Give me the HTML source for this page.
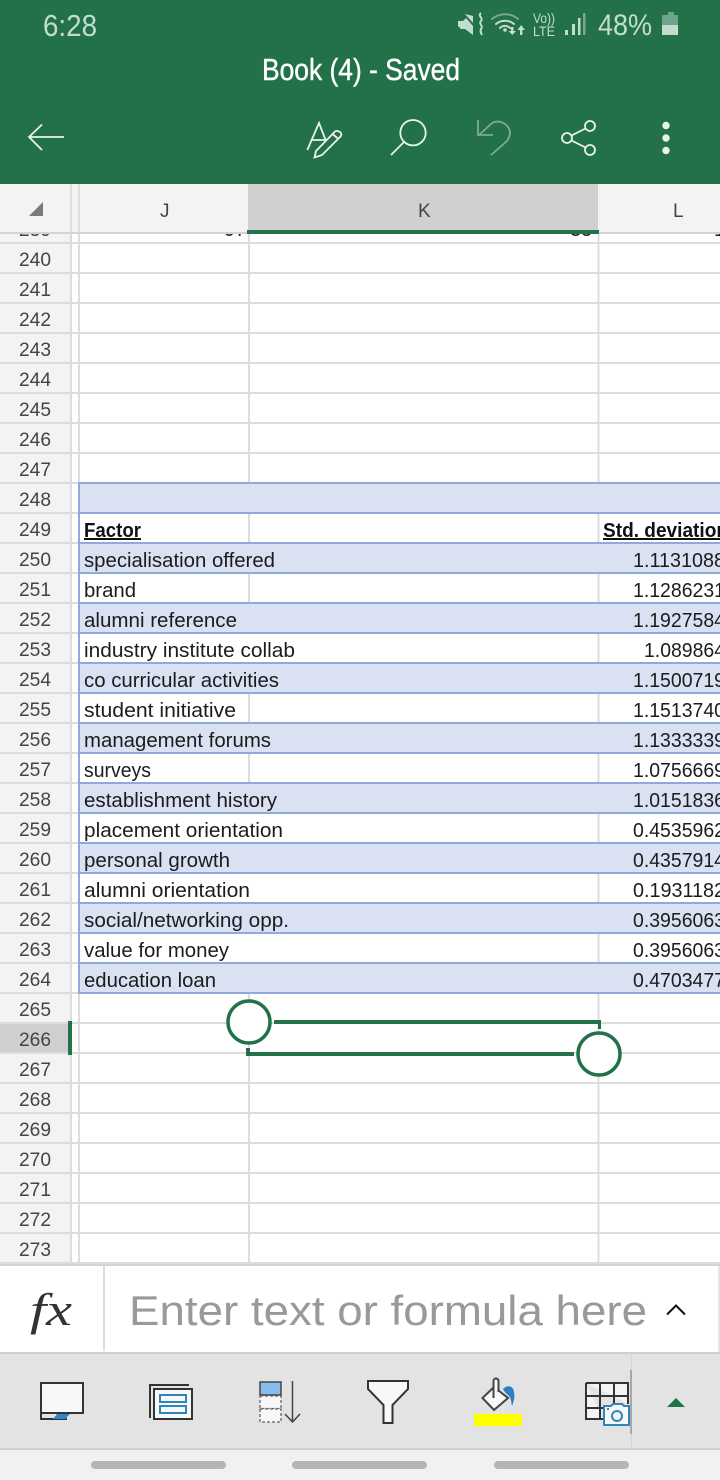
<!DOCTYPE html>
<html><head><meta charset="utf-8"><style>
html,body{margin:0;padding:0;width:720px;height:1480px;overflow:hidden;background:#fff}
svg{display:block}
text{font-family:"Liberation Sans",sans-serif}
.r{font-size:19.2px;fill:#444}
.t{font-size:20px;fill:#1c1c1c}
.h{font-size:19px;fill:#444}
.b{font-weight:bold;text-decoration:underline;fill:#111}
</style></head><body>
<svg width="720" height="1480" viewBox="0 0 720 1480" xmlns="http://www.w3.org/2000/svg">
<defs><clipPath id="c"><rect x="0" y="234" width="720" height="30"/></clipPath></defs>
<rect width="720" height="1480" fill="#fff"/>
<!-- row header -->
<rect x="0" y="184" width="70" height="1078" fill="#f3f3f3"/>
<rect x="0" y="1023" width="70" height="30" fill="#cfcfcf"/>
<!-- partial row 239 -->
<g clip-path="url(#c)"><text class="r" x="19" y="236">239</text><text class="t" x="224" y="236">97</text><text class="t" x="570" y="236">35</text><text class="t" x="714" y="236">1</text></g>
<!-- grid -->
<g fill="#dcdcdc">
<rect x="70" y="184" width="2" height="1080"/><rect x="78" y="184" width="2" height="1080"/>
<rect x="248" y="234" width="2" height="249"/><rect x="597.500" y="234" width="2" height="249"/>
<rect x="248" y="993" width="2" height="270"/><rect x="597.500" y="993" width="2" height="270"/>
<rect x="248" y="513" width="2" height="30"/><rect x="597.500" y="513" width="2" height="30"/>
<rect x="597.500" y="573" width="2" height="30"/><rect x="248" y="573" width="2" height="30"/>
<rect x="597.500" y="633" width="2" height="30"/>
<rect x="597.500" y="693" width="2" height="30"/><rect x="248" y="693" width="2" height="30"/>
<rect x="597.500" y="753" width="2" height="30"/><rect x="248" y="753" width="2" height="30"/>
<rect x="597.500" y="813" width="2" height="30"/><rect x="597.500" y="873" width="2" height="30"/><rect x="597.500" y="933" width="2" height="30"/>
<rect x="0" y="242" width="720" height="2"/><rect x="0" y="272" width="720" height="2"/><rect x="0" y="302" width="720" height="2"/><rect x="0" y="332" width="720" height="2"/><rect x="0" y="362" width="720" height="2"/><rect x="0" y="392" width="720" height="2"/><rect x="0" y="422" width="720" height="2"/><rect x="0" y="452" width="720" height="2"/>
<rect x="0" y="482" width="80" height="2"/><rect x="0" y="512" width="80" height="2"/><rect x="0" y="542" width="80" height="2"/><rect x="0" y="572" width="80" height="2"/><rect x="0" y="602" width="80" height="2"/><rect x="0" y="632" width="80" height="2"/><rect x="0" y="662" width="80" height="2"/><rect x="0" y="692" width="80" height="2"/><rect x="0" y="722" width="80" height="2"/><rect x="0" y="752" width="80" height="2"/><rect x="0" y="782" width="80" height="2"/><rect x="0" y="812" width="80" height="2"/><rect x="0" y="842" width="80" height="2"/><rect x="0" y="872" width="80" height="2"/><rect x="0" y="902" width="80" height="2"/><rect x="0" y="932" width="80" height="2"/><rect x="0" y="962" width="80" height="2"/>
<rect x="0" y="992" width="720" height="2"/><rect x="0" y="1022" width="720" height="2"/><rect x="0" y="1052" width="720" height="2"/><rect x="0" y="1082" width="720" height="2"/><rect x="0" y="1112" width="720" height="2"/><rect x="0" y="1142" width="720" height="2"/><rect x="0" y="1172" width="720" height="2"/><rect x="0" y="1202" width="720" height="2"/><rect x="0" y="1232" width="720" height="2"/><rect x="0" y="1262" width="720" height="2"/>
</g>
<!-- blue rows -->
<g fill="#d9e1f2">
<rect x="79" y="483" width="641" height="30"/><rect x="79" y="543" width="641" height="30"/><rect x="79" y="603" width="641" height="30"/><rect x="79" y="663" width="641" height="30"/><rect x="79" y="723" width="641" height="30"/><rect x="79" y="783" width="641" height="30"/><rect x="79" y="843" width="641" height="30"/><rect x="79" y="903" width="641" height="30"/><rect x="79" y="963" width="641" height="30"/>
</g>
<g fill="#8ea9db">
<rect x="78" y="482" width="2" height="512"/>
<rect x="78" y="482" width="642" height="2"/><rect x="78" y="512" width="642" height="2"/><rect x="78" y="542" width="642" height="2"/><rect x="78" y="572" width="642" height="2"/><rect x="78" y="602" width="642" height="2"/><rect x="78" y="632" width="642" height="2"/><rect x="78" y="662" width="642" height="2"/><rect x="78" y="692" width="642" height="2"/><rect x="78" y="722" width="642" height="2"/><rect x="78" y="752" width="642" height="2"/><rect x="78" y="782" width="642" height="2"/><rect x="78" y="812" width="642" height="2"/><rect x="78" y="842" width="642" height="2"/><rect x="78" y="872" width="642" height="2"/><rect x="78" y="902" width="642" height="2"/><rect x="78" y="932" width="642" height="2"/><rect x="78" y="962" width="642" height="2"/><rect x="78" y="992" width="642" height="2"/>
</g>
<!-- row numbers -->
<g>
<text class="r" x="19" y="266">240</text><text class="r" x="19" y="296">241</text><text class="r" x="19" y="326">242</text><text class="r" x="19" y="356">243</text><text class="r" x="19" y="386">244</text><text class="r" x="19" y="416">245</text><text class="r" x="19" y="446">246</text><text class="r" x="19" y="476">247</text><text class="r" x="19" y="506">248</text><text class="r" x="19" y="536">249</text><text class="r" x="19" y="566">250</text><text class="r" x="19" y="596">251</text><text class="r" x="19" y="626">252</text><text class="r" x="19" y="656">253</text><text class="r" x="19" y="686">254</text><text class="r" x="19" y="716">255</text><text class="r" x="19" y="746">256</text><text class="r" x="19" y="776">257</text><text class="r" x="19" y="806">258</text><text class="r" x="19" y="836">259</text><text class="r" x="19" y="866">260</text><text class="r" x="19" y="896">261</text><text class="r" x="19" y="926">262</text><text class="r" x="19" y="956">263</text><text class="r" x="19" y="986">264</text><text class="r" x="19" y="1016">265</text><text class="r" x="19" y="1046">266</text><text class="r" x="19" y="1076">267</text><text class="r" x="19" y="1106">268</text><text class="r" x="19" y="1136">269</text><text class="r" x="19" y="1166">270</text><text class="r" x="19" y="1196">271</text><text class="r" x="19" y="1226">272</text><text class="r" x="19" y="1256">273</text>
</g>
<!-- labels -->
<text class="t b" x="84" y="537" textLength="57" lengthAdjust="spacingAndGlyphs">Factor</text>
<text class="t" x="84" y="567" textLength="191" lengthAdjust="spacingAndGlyphs">specialisation offered</text>
<text class="t" x="84" y="597" textLength="52" lengthAdjust="spacingAndGlyphs">brand</text>
<text class="t" x="84" y="627" textLength="153" lengthAdjust="spacingAndGlyphs">alumni reference</text>
<text class="t" x="84" y="657" textLength="211" lengthAdjust="spacingAndGlyphs">industry institute collab</text>
<text class="t" x="84" y="687" textLength="195" lengthAdjust="spacingAndGlyphs">co curricular activities</text>
<text class="t" x="84" y="717" textLength="152" lengthAdjust="spacingAndGlyphs">student initiative</text>
<text class="t" x="84" y="747" textLength="187" lengthAdjust="spacingAndGlyphs">management forums</text>
<text class="t" x="84" y="777" textLength="67" lengthAdjust="spacingAndGlyphs">surveys</text>
<text class="t" x="84" y="807" textLength="193" lengthAdjust="spacingAndGlyphs">establishment history</text>
<text class="t" x="84" y="837" textLength="199" lengthAdjust="spacingAndGlyphs">placement orientation</text>
<text class="t" x="84" y="867" textLength="146" lengthAdjust="spacingAndGlyphs">personal growth</text>
<text class="t" x="84" y="897" textLength="166" lengthAdjust="spacingAndGlyphs">alumni orientation</text>
<text class="t" x="84" y="927" textLength="205" lengthAdjust="spacingAndGlyphs">social/networking opp.</text>
<text class="t" x="84" y="957" textLength="145" lengthAdjust="spacingAndGlyphs">value for money</text>
<text class="t" x="84" y="987" textLength="132" lengthAdjust="spacingAndGlyphs">education loan</text>
<!-- numbers -->
<text class="t b" x="603" y="537" textLength="125" lengthAdjust="spacingAndGlyphs">Std. deviation</text>
<text class="t" x="633" y="567" textLength="92" lengthAdjust="spacingAndGlyphs">1.1131088</text>
<text class="t" x="633" y="597" textLength="92" lengthAdjust="spacingAndGlyphs">1.1286231</text>
<text class="t" x="633" y="627" textLength="92" lengthAdjust="spacingAndGlyphs">1.1927584</text>
<text class="t" x="644" y="657" textLength="81" lengthAdjust="spacingAndGlyphs">1.089864</text>
<text class="t" x="633" y="687" textLength="92" lengthAdjust="spacingAndGlyphs">1.1500719</text>
<text class="t" x="633" y="717" textLength="92" lengthAdjust="spacingAndGlyphs">1.1513740</text>
<text class="t" x="633" y="747" textLength="92" lengthAdjust="spacingAndGlyphs">1.1333339</text>
<text class="t" x="633" y="777" textLength="92" lengthAdjust="spacingAndGlyphs">1.0756669</text>
<text class="t" x="633" y="807" textLength="92" lengthAdjust="spacingAndGlyphs">1.0151836</text>
<text class="t" x="633" y="837" textLength="92" lengthAdjust="spacingAndGlyphs">0.4535962</text>
<text class="t" x="633" y="867" textLength="92" lengthAdjust="spacingAndGlyphs">0.4357914</text>
<text class="t" x="633" y="897" textLength="92" lengthAdjust="spacingAndGlyphs">0.1931182</text>
<text class="t" x="633" y="927" textLength="92" lengthAdjust="spacingAndGlyphs">0.3956063</text>
<text class="t" x="633" y="957" textLength="92" lengthAdjust="spacingAndGlyphs">0.3956063</text>
<text class="t" x="633" y="987" textLength="92" lengthAdjust="spacingAndGlyphs">0.4703477</text>
<!-- selection -->
<rect x="68" y="1021" width="4" height="34" fill="#237148"/>
<g fill="#237148">
<rect x="274" y="1020" width="327" height="4"/><rect x="598" y="1020" width="3" height="9"/>
<rect x="246" y="1052" width="328" height="4"/><rect x="246" y="1048" width="4" height="8"/>
</g>
<circle cx="249" cy="1022" r="21" fill="#fff" stroke="#237148" stroke-width="3.500"/>
<circle cx="599" cy="1054" r="21" fill="#fff" stroke="#237148" stroke-width="3.500"/>
<!-- column header -->
<rect x="0" y="184" width="720" height="49" fill="#f3f3f3"/>
<rect x="248" y="184" width="350" height="47" fill="#d0d0d0"/>
<rect x="70" y="184" width="2" height="49" fill="#dcdcdc"/><rect x="78" y="184" width="2" height="49" fill="#dcdcdc"/>
<rect x="0" y="232" width="720" height="2" fill="#d4d4d4"/>
<rect x="247" y="230" width="352" height="4" fill="#237148"/>
<path d="M29 216H43V202Z" fill="#7a7a7a"/>
<text class="h" x="160" y="217">J</text><text class="h" x="418" y="217">K</text><text class="h" x="673" y="217">L</text>
<!-- green app bar -->
<rect x="0" y="0" width="720" height="184" fill="#237148"/>
<text x="43" y="36" font-size="31" fill="#c4dccf" textLength="54" lengthAdjust="spacingAndGlyphs">6:28</text>
<text x="262" y="80" font-size="31" fill="#fff" stroke="#fff" stroke-width="0.400" textLength="198" lengthAdjust="spacingAndGlyphs">Book (4) - Saved</text>
<!-- status icons -->
<path d="M458 21h5l3-3 7 8v9l-8-6h-4l-3-3zM465 14l8 2v7z" fill="#c4dccf"/>
<path d="M481 13c-4 3 3 5 0 8s3 5 0 8c-1 2 0 4 1 6" fill="none" stroke="#c4dccf" stroke-width="2"/>
<g fill="none" stroke-linecap="round">
<path d="M492 19a20 20 0 0 1 26 0" stroke="#79a78f" stroke-width="2"/>
<path d="M496 24a14 14 0 0 1 18 0" stroke="#c4dccf" stroke-width="2"/>
<path d="M500 28a7 7 0 0 1 10 0" stroke="#c4dccf" stroke-width="2"/>
</g>
<circle cx="505" cy="30" r="1.800" fill="#c4dccf"/>
<path d="M511 27h2.500v4h2.500l-3.700 4-3.700-4h2.400zM520 35v-5h-2.500l3.700-5 3.700 5h-2.500v5z" fill="#c4dccf"/>
<text x="533" y="23" font-size="14" fill="#c4dccf" textLength="22" lengthAdjust="spacingAndGlyphs">Vo))</text>
<text x="533" y="36" font-size="14" fill="#c4dccf" textLength="22" lengthAdjust="spacingAndGlyphs">LTE</text>
<g fill="#c4dccf"><rect x="565" y="30" width="3" height="5"/><rect x="572" y="24" width="3" height="11"/><rect x="578" y="18" width="2.500" height="17"/></g>
<rect x="583" y="13" width="2.500" height="22" fill="#79a78f"/>
<text x="598" y="35" font-size="30" fill="#c4dccf" textLength="54" lengthAdjust="spacingAndGlyphs">48%</text>
<path d="M662 15h6v-3h6v3h4v10h-16z" fill="#6ea488"/>
<rect x="662" y="25" width="16" height="10" fill="#c4dccf"/>
<!-- toolbar icons -->
<g fill="none" stroke="#e9f2ed" stroke-width="1.800">
<path d="M64 137H29M42 124.500L29 137 42 150"/>
<path d="M307.300 150L319 123 326 141M310.700 140H325"/>
<path d="M314.500 157.500L316 151 335 131.500Q337 130 340 132 342 134 341 136L322 155ZM332.500 134L338.500 139"/>
<circle cx="413" cy="132.700" r="12.700"/>
<path d="M404 142L391 155"/>
<path d="M478 120v15h15" stroke="#7fab94"/>
<path d="M479 135l12-11c7-6 19 0 19 9 0 3-1 5-3 8l-16 14" stroke="#7fab94"/>
<circle cx="590" cy="126" r="5"/><circle cx="567" cy="138" r="5"/><circle cx="590" cy="150" r="5"/>
<path d="M571.500 135.500L585.500 128.500M571.500 140.500L585.500 147.500"/>
</g>
<g fill="#e9f2ed"><circle cx="666" cy="125.500" r="3.700"/><circle cx="666" cy="138" r="3.700"/><circle cx="666" cy="150.500" r="3.700"/></g>
<!-- formula bar -->
<rect x="0" y="1264" width="720" height="2" fill="#d4d4d4"/>
<rect x="0" y="1266" width="720" height="86" fill="#fff"/>
<rect x="103" y="1266" width="2" height="85" fill="#dcdcdc"/>
<rect x="718" y="1266" width="2" height="86" fill="#e4e4e4"/>
<text x="30" y="1325" style="font-family:'Liberation Serif',serif;font-style:italic" font-size="46" fill="#333" textLength="42" lengthAdjust="spacingAndGlyphs">fx</text>
<text x="129" y="1325" font-size="42" fill="#999" textLength="518" lengthAdjust="spacingAndGlyphs">Enter text or formula here</text>
<path d="M667 1314.500L676 1305.500 685 1314.500" fill="none" stroke="#111" stroke-width="2"/>
<!-- bottom toolbar -->
<rect x="0" y="1352" width="720" height="2" fill="#cfcfcf"/>
<rect x="0" y="1354" width="720" height="94" fill="#e3e3e3"/>
<rect x="0" y="1448" width="720" height="2" fill="#cfcfcf"/>
<rect x="0" y="1450" width="720" height="30" fill="#f1f1f1"/>
<rect x="91" y="1461" width="135" height="8" rx="4" fill="#b5b5b5"/>
<rect x="292" y="1461" width="135" height="8" rx="4" fill="#b5b5b5"/>
<rect x="494" y="1461" width="135" height="8" rx="4" fill="#b5b5b5"/>
<rect x="631" y="1354" width="1" height="94" fill="#d4d4d4"/>
<rect x="630" y="1370" width="2" height="64" fill="#a8a8a8"/>
<!-- monitor -->
<path d="M41 1413V1419H67" fill="none" stroke="#333" stroke-width="2"/>
<path d="M57 1414H70L65 1419H53Z" fill="#2f86c8"/>
<rect x="41" y="1383" width="42" height="30" fill="#f8f8f8" stroke="#333" stroke-width="2"/>
<!-- sheets -->
<path d="M150 1418V1385H189" fill="none" stroke="#333" stroke-width="2"/>
<rect x="154" y="1389" width="38" height="30" fill="#f8f8f8" stroke="#333" stroke-width="2"/>
<rect x="160" y="1395" width="26" height="7" fill="none" stroke="#2e86bc" stroke-width="2"/>
<rect x="160" y="1406" width="26" height="7" fill="none" stroke="#2e86bc" stroke-width="2"/>
<!-- sort -->
<rect x="260" y="1382" width="21" height="13" fill="#85bdee" stroke="#444" stroke-width="1.500"/>
<rect x="260" y="1396" width="21" height="12.500" fill="#f8f8f8" stroke="#666" stroke-width="1.300" stroke-dasharray="3 2"/>
<rect x="260" y="1409" width="21" height="13" fill="#f8f8f8" stroke="#666" stroke-width="1.300" stroke-dasharray="3 2"/>
<path d="M292.500 1381V1422M285 1414L292.500 1422 300 1414" fill="none" stroke="#444" stroke-width="1.500"/>
<!-- filter -->
<path d="M368 1381H408V1389L392.500 1405V1423H383.500V1405L368 1389Z" fill="#f8f8f8" stroke="#333" stroke-width="2"/>
<!-- bucket -->
<path d="M482.500 1398L494 1387 508 1398 494 1410Z" fill="#f8f8f8" stroke="#444" stroke-width="2"/>
<path d="M493.500 1398V1381a2.500 2.500 0 0 1 5 0V1392" fill="#f8f8f8" stroke="#444" stroke-width="2"/>
<path d="M503 1389c4-4 10-4 11 3 1 5 0 9-2 14-1-5-1-8-3-10-2-2-4-3-6-7z" fill="#2f7fc4"/>
<rect x="474" y="1414" width="48" height="12" fill="#ffff00"/>
<!-- table camera -->
<path d="M586 1383H628V1404M600 1383V1419M614 1383V1404M586 1396H628M586 1408H603M586 1383V1419H603" fill="#f4f4f4" stroke="#333" stroke-width="2"/>
<path d="M604 1406H611L613 1404H622L624 1406H629V1425H604Z" fill="#f8f8f8" stroke="#2e86bc" stroke-width="2"/>
<circle cx="617" cy="1416" r="5" fill="none" stroke="#2e86bc" stroke-width="2"/>
<rect x="607" y="1408" width="2" height="2" fill="#2e86bc"/>
<path d="M667 1407H685L676 1398Z" fill="#237148"/>
</svg>
</body></html>
